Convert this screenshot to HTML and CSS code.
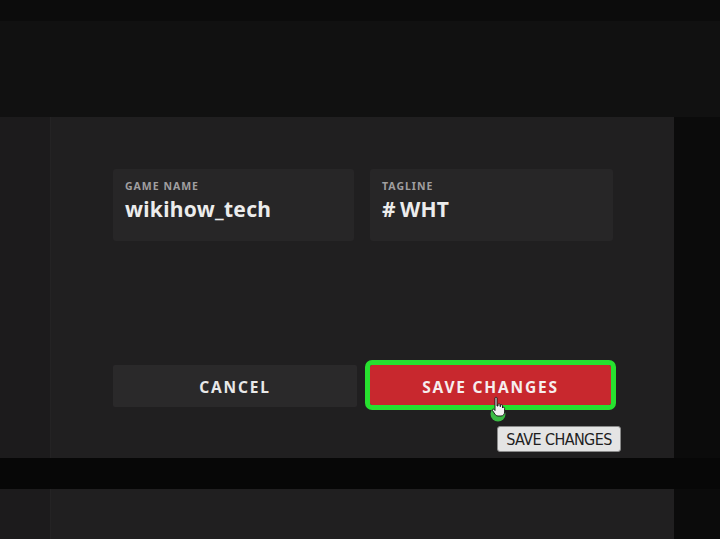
FILE: index.html
```html
<!DOCTYPE html>
<html>
<head>
<meta charset="utf-8">
<link rel="stylesheet" href="styles.css">
</head>
<body>
<div class="page">
  <div class="topbar"></div>
  <div class="band"></div>
  <div class="row main-row">
    <div class="panel">
      <div class="strip"></div>
      <div class="content">
        <div class="fields">
          <div class="field field-name">
            <div class="label">GAME NAME</div>
            <div class="value">wikihow_tech</div>
          </div>
          <div class="field field-tag">
            <div class="label">TAGLINE</div>
            <div class="value"><span class="hash">#</span>WHT</div>
          </div>
        </div>
        <div class="buttons">
          <div class="btn cancel">CANCEL</div>
          <div class="btn save">SAVE CHANGES</div>
        </div>
        <div class="cursor">
          <svg width="22" height="28" viewBox="0 0 22 28">
            <circle cx="9" cy="18" r="7.5" fill="#3fd64a" opacity="0.85"/>
            <path d="M6 2 C6 1 8 1 8 2 L8 10 L9 10 L9 8.5 C9 7.5 11 7.5 11 8.5 L11 10.5 L11.5 10.5 L11.5 9.5 C11.5 8.5 13.5 8.5 13.5 9.5 L13.5 12 C13.5 12 13.8 11 15 11.2 C15.6 11.4 15.6 12 15.6 12.5 L15.6 16 C15.6 18.5 14 20 12 20 L9 20 C7.5 20 6.5 19 5.8 18 L3.5 14.5 C3 13.5 4 12.6 5 13.3 L6 14.5 Z" fill="#f2f2f2" stroke="#111" stroke-width="0.9"/>
          </svg>
        </div>
        <div class="tooltip">SAVE CHANGES</div>
      </div>
    </div>
    <div class="side"></div>
  </div>
  <div class="gap"></div>
  <div class="row bottom-row">
    <div class="panel panel-bottom">
      <div class="strip"></div>
      <div class="content"></div>
    </div>
    <div class="side"></div>
  </div>
</div>
</body>
</html>
```

FILE: styles.css
```css
html, body {
  margin: 0;
  padding: 0;
  background: #0a0a0a;
}
.page {
  width: 720px;
  height: 539px;
  overflow: hidden;
  display: flex;
  flex-direction: column;
  font-family: "Noto Sans", "Open Sans", sans-serif;
}
.topbar {
  height: 21px;
  background: #0c0c0c;
  flex: none;
}
.band {
  height: 96px;
  background: #111111;
  flex: none;
}
.row {
  display: flex;
  flex: none;
}
.main-row {
  height: 341px;
}
.bottom-row {
  flex: 1;
}
.gap {
  height: 31px;
  background: #070707;
  flex: none;
}
.panel {
  width: 674px;
  display: flex;
  background: #201f20;
  flex: none;
}
.side {
  flex: 1;
  background: #0b0b0b;
}
.strip {
  width: 50px;
  background: #1c1b1c;
  border-right: 1px solid #242324;
  flex: none;
}
.content {
  flex: 1;
  position: relative;
  padding: 52px 0 0 62px;
  display: flex;
  flex-direction: column;
}
.fields {
  display: flex;
  gap: 16px;
}
.field {
  height: 72px;
  background: #272627;
  border-radius: 3px;
  box-sizing: border-box;
  padding: 10px 12px 0;
}
.field-name { width: 241px; }
.field-tag { width: 243px; }
.label {
  font-size: 10.5px;
  font-weight: 700;
  letter-spacing: 1px;
  color: #a09fa0;
  line-height: 14px;
}
.value {
  font-size: 21px;
  font-weight: 700;
  color: #ececec;
  line-height: 28px;
  margin-top: 2px;
  letter-spacing: 0.3px;
}
.hash {
  margin-right: 4px;
}
.buttons {
  display: flex;
  gap: 13px;
  margin-top: 124px;
}
.btn {
  height: 42px;
  display: flex;
  align-items: center;
  justify-content: center;
  font-size: 15.5px;
  font-weight: 700;
  letter-spacing: 1.8px;
  color: #e8e8e8;
  border-radius: 2px;
  padding-top: 1px;
  box-sizing: border-box;
}
.cancel {
  width: 244px;
  background: #2a292a;
}
.save {
  width: 241px;
  height: 40px;
  background: #c8282e;
  color: #f6eeee;
  outline: 5px solid #27e02f;
  padding-top: 3px;
}
.cursor {
  position: absolute;
  left: 438px;
  top: 279px;
}
.tooltip {
  position: absolute;
  left: 446px;
  top: 309px;
  width: 124px;
  height: 26px;
  box-sizing: border-box;
  background: #e4e4e4;
  border: 1px solid #8a8a8a;
  border-radius: 3px;
  color: #1e1e1e;
  font-family: "DejaVu Sans Condensed", "Liberation Sans", sans-serif;
  font-size: 16px;
  display: flex;
  align-items: center;
  justify-content: center;
  letter-spacing: -0.6px;
}
```
